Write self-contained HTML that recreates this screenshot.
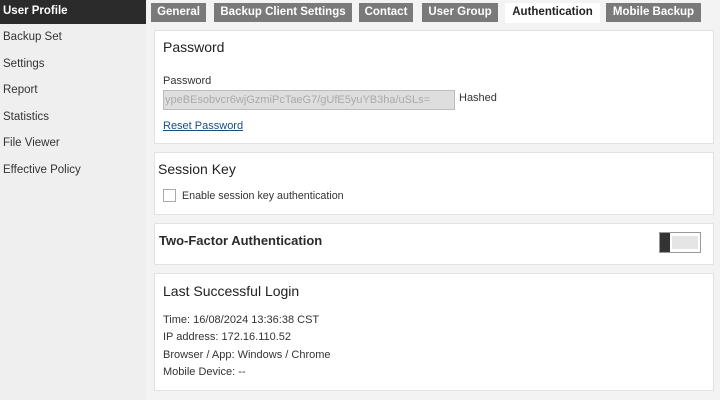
<!DOCTYPE html>
<html><head><style>
*{box-sizing:border-box;margin:0;padding:0}
body{width:720px;height:400px;overflow:hidden;background:#f1f1f1;font-family:"Liberation Sans",Arial,sans-serif;color:#333;position:relative}
.side{position:absolute;left:0;top:0;width:146px;height:400px;background:#efefef}
.side div{height:26.5px;line-height:26px;padding-left:3px;font-size:11.5px;color:#333}
.side .act{background:#2b2b2b;color:#fff;height:24px;line-height:23px;font-weight:bold}
.main{position:absolute;left:146px;top:0;width:574px;height:400px;background:#f3f3f3}
.tab{position:absolute;top:3px;height:19px;line-height:18px;background:#7a7a7a;color:#fff;font-weight:bold;font-size:11.5px;text-align:center}
.tab.on{background:#fff;color:#222;height:20px}
.p{position:absolute;left:154px;width:560px;background:#fff;border:1px solid #e2e2e2}
.h{position:absolute;font-size:14px;color:#222}
.t{position:absolute;font-size:11px;color:#333;white-space:nowrap}
</style></head><body>
<div class="side">
<div class="act">User Profile</div>
<div>Backup Set</div><div>Settings</div><div>Report</div><div>Statistics</div><div>File Viewer</div><div>Effective Policy</div>
</div>
<div class="main"></div>
<div class="tab" style="left:151px;width:55px">General</div>
<div class="tab" style="left:214px;width:138px">Backup Client Settings</div>
<div class="tab" style="left:359px;width:54px">Contact</div>
<div class="tab" style="left:422px;width:76px">User Group</div>
<div class="tab on" style="left:505px;width:95px">Authentication</div>
<div class="tab" style="left:606px;width:95px">Mobile Backup</div>

<div class="p" style="top:30px;height:114px"></div>
<div class="h" style="left:163px;top:39px">Password</div>
<div class="t" style="left:163px;top:75px">Password</div>
<div style="position:absolute;left:163px;top:90px;width:292px;height:20px;background:#dedede;border:1px solid #bbb;font-size:11px;color:#aaa;line-height:18px;padding-left:1px;overflow:hidden;white-space:nowrap">ypeBEsobvcr6wjGzmiPcTaeG7/gUfE5yuYB3ha/uSLs=</div>
<div class="t" style="left:459px;top:92px">Hashed</div>
<div class="t" style="left:163px;top:120px;color:#1a4d80;text-decoration:underline">Reset Password</div>

<div class="p" style="top:152px;height:63px"></div>
<div class="h" style="left:158px;top:161px">Session Key</div>
<div style="position:absolute;left:163px;top:189px;width:13px;height:13px;border:1px solid #aaa;background:#fff"></div>
<div class="t" style="left:182px;top:190px;font-size:10.7px">Enable session key authentication</div>

<div class="p" style="top:223px;height:42px"></div>
<div class="h" style="left:159px;top:233px;font-weight:bold;font-size:13px;color:#2a2a2a">Two-Factor Authentication</div>
<div style="position:absolute;left:659px;top:232px;width:42px;height:21px;border:1px solid #999;background:#fff">
<div style="position:absolute;left:0;top:0;width:10px;height:19px;background:#333"></div>
<div style="position:absolute;left:12px;top:3px;width:26px;height:13px;background:#e5e5e5"></div>
</div>

<div class="p" style="top:273px;height:118px"></div>
<div class="h" style="left:163px;top:283px">Last Successful Login</div>
<div class="t" style="left:163px;top:314px">Time: 16/08/2024 13:36:38 CST</div>
<div class="t" style="left:163px;top:331px">IP address: 172.16.110.52</div>
<div class="t" style="left:163px;top:349px">Browser / App: Windows / Chrome</div>
<div class="t" style="left:163px;top:366px">Mobile Device: --</div>
</body></html>
